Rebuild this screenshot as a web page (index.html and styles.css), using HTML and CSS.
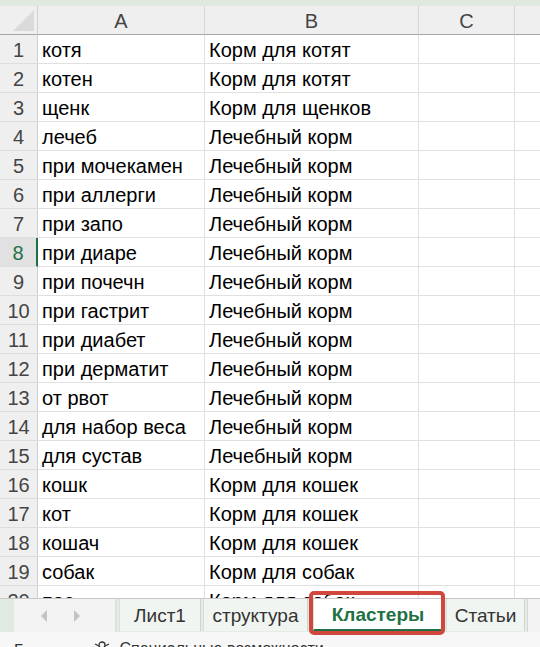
FILE: index.html
```html
<!DOCTYPE html>
<html lang="ru">
<head>
   <meta charset="utf-8">
   <title>Кластеры</title>
   <link rel="stylesheet" href="styles.css">
</head>
<body>
   <div class="app">
      <div class="ribbon-edge"></div>

      <!-- Sheet grid -->
      <div class="sheet">
         <div class="corner"><span class="corner-tri"></span></div>
         <div class="col-head">A</div>
         <div class="col-head">B</div>
         <div class="col-head">C</div>
         <div class="col-head last"></div>

         <div class="row-head">1</div><div class="cell">котя</div><div class="cell">Корм для котят</div><div class="cell"></div><div class="cell last"></div>
         <div class="row-head">2</div><div class="cell">котен</div><div class="cell">Корм для котят</div><div class="cell"></div><div class="cell last"></div>
         <div class="row-head">3</div><div class="cell">щенк</div><div class="cell">Корм для щенков</div><div class="cell"></div><div class="cell last"></div>
         <div class="row-head">4</div><div class="cell">лечеб</div><div class="cell">Лечебный корм</div><div class="cell"></div><div class="cell last"></div>
         <div class="row-head">5</div><div class="cell">при мочекамен</div><div class="cell">Лечебный корм</div><div class="cell"></div><div class="cell last"></div>
         <div class="row-head">6</div><div class="cell">при аллерги</div><div class="cell">Лечебный корм</div><div class="cell"></div><div class="cell last"></div>
         <div class="row-head">7</div><div class="cell">при запо</div><div class="cell">Лечебный корм</div><div class="cell"></div><div class="cell last"></div>
         <div class="row-head active">8</div><div class="cell">при диаре</div><div class="cell">Лечебный корм</div><div class="cell"></div><div class="cell last"></div>
         <div class="row-head">9</div><div class="cell">при почечн</div><div class="cell">Лечебный корм</div><div class="cell"></div><div class="cell last"></div>
         <div class="row-head">10</div><div class="cell">при гастрит</div><div class="cell">Лечебный корм</div><div class="cell"></div><div class="cell last"></div>
         <div class="row-head">11</div><div class="cell">при диабет</div><div class="cell">Лечебный корм</div><div class="cell"></div><div class="cell last"></div>
         <div class="row-head">12</div><div class="cell">при дерматит</div><div class="cell">Лечебный корм</div><div class="cell"></div><div class="cell last"></div>
         <div class="row-head">13</div><div class="cell">от рвот</div><div class="cell">Лечебный корм</div><div class="cell"></div><div class="cell last"></div>
         <div class="row-head">14</div><div class="cell">для набор веса</div><div class="cell">Лечебный корм</div><div class="cell"></div><div class="cell last"></div>
         <div class="row-head">15</div><div class="cell">для сустав</div><div class="cell">Лечебный корм</div><div class="cell"></div><div class="cell last"></div>
         <div class="row-head">16</div><div class="cell">кошк</div><div class="cell">Корм для кошек</div><div class="cell"></div><div class="cell last"></div>
         <div class="row-head">17</div><div class="cell">кот</div><div class="cell">Корм для кошек</div><div class="cell"></div><div class="cell last"></div>
         <div class="row-head">18</div><div class="cell">кошач</div><div class="cell">Корм для кошек</div><div class="cell"></div><div class="cell last"></div>
         <div class="row-head">19</div><div class="cell">собак</div><div class="cell">Корм для собак</div><div class="cell"></div><div class="cell last"></div>
         <div class="row-head">20</div><div class="cell">пес</div><div class="cell">Корм для собак</div><div class="cell"></div><div class="cell last"></div>
      </div>

      <!-- Sheet tabs -->
      <div class="tabbar">
         <div class="tab-nav">
            <svg width="10" height="12" viewBox="0 0 10 12"><path d="M8 0 L2 6 L8 12 Z" fill="#c4c4c4"/></svg>
            <svg width="10" height="12" viewBox="0 0 10 12"><path d="M2 0 L8 6 L2 12 Z" fill="#c4c4c4"/></svg>
         </div>
         <div class="tabs">
            <div class="tab">Лист1</div>
            <div class="tab">структура</div>
            <div class="tab selected">Кластеры<span class="highlight"></span></div>
            <div class="tab">Статьи</div>
         </div>
         <div class="tab-rest"></div>
      </div>

      <!-- Status bar -->
      <div class="statusbar">
         <span class="status-text">Готово</span>
         <span class="status-acc">
            <svg width="18" height="18" viewBox="0 0 18 18"><circle cx="9" cy="5" r="3" fill="none" stroke="#333" stroke-width="1.3"/><path d="M2 4 L6 6 M16 4 L12 6 M9 8 V13 M6 17 L9 13 L12 17" fill="none" stroke="#333" stroke-width="1.3"/></svg>
            Специальные возможности
         </span>
      </div>
   </div>
</body>
</html>
```

FILE: styles.css
```css
* {
   margin: 0;
   padding: 0;
   box-sizing: border-box;
}

body {
   width: 540px;
   height: 647px;
   overflow: hidden;
   background: #ffffff;
   font-family: 'Liberation Sans', Arial, sans-serif;
   color: #000;
}

.app {
   display: flex;
   flex-direction: column;
   height: 647px;
}

.ribbon-edge {
   height: 6px;
   background: #dfe9df;
   flex-shrink: 0;
}

/* Grid */
.sheet {
   flex: 1;
   overflow: hidden;
   display: grid;
   grid-template-columns: 38px 167px 214px 96px 1fr;
   grid-auto-rows: 29px;
   font-size: 20px;
}

.corner,
.col-head {
   background: #efefef;
   border-bottom: 1px solid #a6a6a6;
   border-right: 1px solid #d6d6d6;
}

.corner {
   position: relative;
   border-right: 1px solid #d0d0d0;
}

.corner-tri {
   position: absolute;
   right: 3px;
   bottom: 3px;
   width: 0;
   height: 0;
   border-left: 21px solid transparent;
   border-bottom: 21px solid #dadada;
}

.col-head {
   display: flex;
   align-items: center;
   justify-content: center;
   color: #444;
   padding-top: 2px;
}

.col-head.last,
.cell.last {
   border-right: none;
}

.row-head {
   background: #efefef;
   border-right: 1px solid #cfcfcf;
   border-bottom: 1px solid #dedede;
   color: #444;
   display: flex;
   align-items: center;
   justify-content: center;
   padding-top: 2px;
}

.row-head.active {
   background: #e1e1e1;
   color: #1e7145;
   border-right: 2px solid #1e7145;
}

.cell {
   border-right: 1px solid #e0e0e0;
   border-bottom: 1px solid #e0e0e0;
   padding: 2px 3px 0 4px;
   display: flex;
   align-items: center;
   white-space: nowrap;
   overflow: hidden;
}

/* Tabs */
.tabbar {
   height: 34px;
   flex-shrink: 0;
   display: flex;
   border-top: 1px solid #c8c8c8;
   background: #f3f3f3;
   position: relative;
}

.tab-nav {
   width: 117px;
   display: flex;
   align-items: center;
   gap: 23px;
   padding-left: 25px;
   border-left: 14px solid #e0eae0;
   border-right: 2px solid #d9e3d9;
}

.tabs {
   display: flex;
   background: #e4ece4;
   padding-right: 2px;
}

.tab {
   position: relative;
   display: flex;
   align-items: center;
   justify-content: center;
   font-size: 19px;
   color: #333;
   background: #f1f5f1;
   border-left: 1px solid #d6e0d6;
   border-right: 1px solid #ccd6cc;
   margin-left: 2px;
   padding: 2px 6px 0;
   height: 32px;
   white-space: nowrap;
}

.tab:nth-child(1) { width: 82px; }
.tab:nth-child(2) { width: 105px; }
.tab:nth-child(4) { width: 79px; }

.tab.selected {
   width: 130px;
   margin-left: 5px;
   margin-right: 1px;
   background: #ffffff;
   color: #1e7145;
   font-weight: bold;
   border-bottom: 2px solid #1e7145;
}

.tab.selected .highlight {
   position: absolute;
   left: -5px;
   right: -3px;
   top: -8px;
   bottom: -6px;
   border: 4px solid #d1463d;
   border-radius: 5px;
   z-index: 2;
}

.tab-rest {
   flex: 1;
   border-left: 1px solid #d6d6d6;
}

/* Status bar */
.statusbar {
   height: 15px;
   flex-shrink: 0;
   background: #f7f7f7;
   display: flex;
   align-items: flex-start;
   padding: 10px 0 0 14px;
   font-size: 16px;
   color: #333;
   overflow: hidden;
   gap: 30px;
}

.status-acc {
   display: flex;
   align-items: flex-start;
   gap: 8px;
   margin-top: -2px;
}
```
